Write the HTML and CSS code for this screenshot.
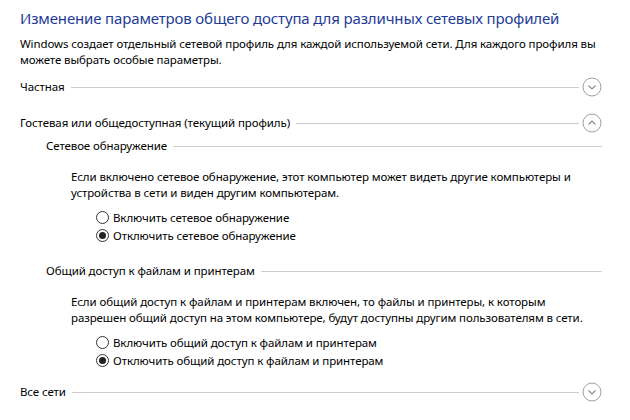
FILE: index.html
```html
<!DOCTYPE html>
<html lang="ru">
<head>
<meta charset="utf-8">
<link rel="stylesheet" href="styles.css">
</head>
<body>
<div class="page">
  <h1 class="title">Изменение параметров общего доступа для различных сетевых профилей</h1>
  <p class="intro">Windows создает отдельный сетевой профиль для каждой используемой сети. Для каждого профиля вы можете выбрать особые параметры.</p>

  <div class="group g-private">
    <span class="g-label">Частная</span>
    <span class="rule"></span>
    <span class="toggle"><svg viewBox="0 0 20 20" width="20" height="20"><circle cx="10" cy="10" r="9" fill="none" stroke="#a0a0a0" stroke-width="1"/><path d="M6.5 8.5 L10 12 L13.5 8.5" fill="none" stroke="#8a8a8a" stroke-width="1.1"/></svg></span>
  </div>

  <div class="group g-guest">
    <span class="g-label">Гостевая или общедоступная (текущий профиль)</span>
    <span class="rule"></span>
    <span class="toggle"><svg viewBox="0 0 20 20" width="20" height="20"><circle cx="10" cy="10" r="9" fill="none" stroke="#a0a0a0" stroke-width="1"/><path d="M6.5 11.5 L10 8 L13.5 11.5" fill="none" stroke="#8a8a8a" stroke-width="1.1"/></svg></span>
  </div>

  <div class="sub">
    <div class="sub-head s1">
      <span class="g-label">Сетевое обнаружение</span>
      <span class="rule"></span>
    </div>
    <p class="desc d1">Если включено сетевое обнаружение, этот компьютер может видеть другие компьютеры и устройства в сети и виден другим компьютерам.</p>
    <div class="radios r1">
      <label class="radio"><span class="dot"></span>Включить сетевое обнаружение</label>
      <label class="radio checked"><span class="dot"></span>Отключить сетевое обнаружение</label>
    </div>

    <div class="sub-head s2">
      <span class="g-label">Общий доступ к файлам и принтерам</span>
      <span class="rule"></span>
    </div>
    <p class="desc d2">Если общий доступ к файлам и принтерам включен, то файлы и принтеры, к которым разрешен общий доступ на этом компьютере, будут доступны другим пользователям в сети.</p>
    <div class="radios r2">
      <label class="radio"><span class="dot"></span>Включить общий доступ к файлам и принтерам</label>
      <label class="radio checked"><span class="dot"></span>Отключить общий доступ к файлам и принтерам</label>
    </div>
  </div>

  <div class="group g-all">
    <span class="g-label">Все сети</span>
    <span class="rule"></span>
    <span class="toggle"><svg viewBox="0 0 20 20" width="20" height="20"><circle cx="10" cy="10" r="9" fill="none" stroke="#a0a0a0" stroke-width="1"/><path d="M6.5 8.5 L10 12 L13.5 8.5" fill="none" stroke="#8a8a8a" stroke-width="1.1"/></svg></span>
  </div>
</div>
</body>
</html>
```

FILE: styles.css
```css
html, body {
  margin: 0;
  padding: 0;
  background: #ffffff;
}
body {
  font-family: "Noto Sans", "Open Sans", sans-serif;
  font-size: 11.5px;
  letter-spacing: -0.1px;
  color: #000000;
}
.page {
  width: 582px;
  padding: 7px 0 0 20px;
}
.title {
  margin: 0;
  font-weight: normal;
  font-size: 15px;
  letter-spacing: -0.15px;
  line-height: 22px;
  color: #1e3c96;
  white-space: nowrap;
}
.intro {
  margin: 7px 0 0 0;
  line-height: 16px;
  width: 580px;
}
.group {
  display: flex;
  align-items: center;
  height: 20px;
}
.g-private { margin-top: 9px; }
.g-guest { margin-top: 16px; }
.g-all { margin-top: 13px; }
.g-label {
  line-height: 16px;
  white-space: nowrap;
}
.rule {
  flex: 1;
  height: 1px;
  background: #cdcdcd;
  margin-left: 6px;
  margin-right: 3px;
}
.toggle {
  display: flex;
  width: 20px;
  height: 20px;
}
.sub {
  padding-left: 26px;
}
.sub-head {
  display: flex;
  align-items: center;
  height: 16px;
}
.sub-head .rule { margin-right: 0; }
.s1 { margin-top: 5px; }
.s2 { margin-top: 19px; }
.desc {
  margin: 15px 0 0 25px;
  line-height: 16px;
}
.radios {
  margin: 7px 0 0 50px;
  display: flex;
  flex-direction: column;
}
.radio {
  display: flex;
  align-items: center;
  height: 18px;
}
.dot {
  width: 11px;
  height: 11px;
  border: 1px solid #333333;
  border-radius: 50%;
  margin-right: 4px;
  box-sizing: content-box;
  position: relative;
}
.checked .dot::after {
  content: "";
  position: absolute;
  left: 2px;
  top: 2px;
  width: 7px;
  height: 7px;
  border-radius: 50%;
  background: #222222;
}
```
